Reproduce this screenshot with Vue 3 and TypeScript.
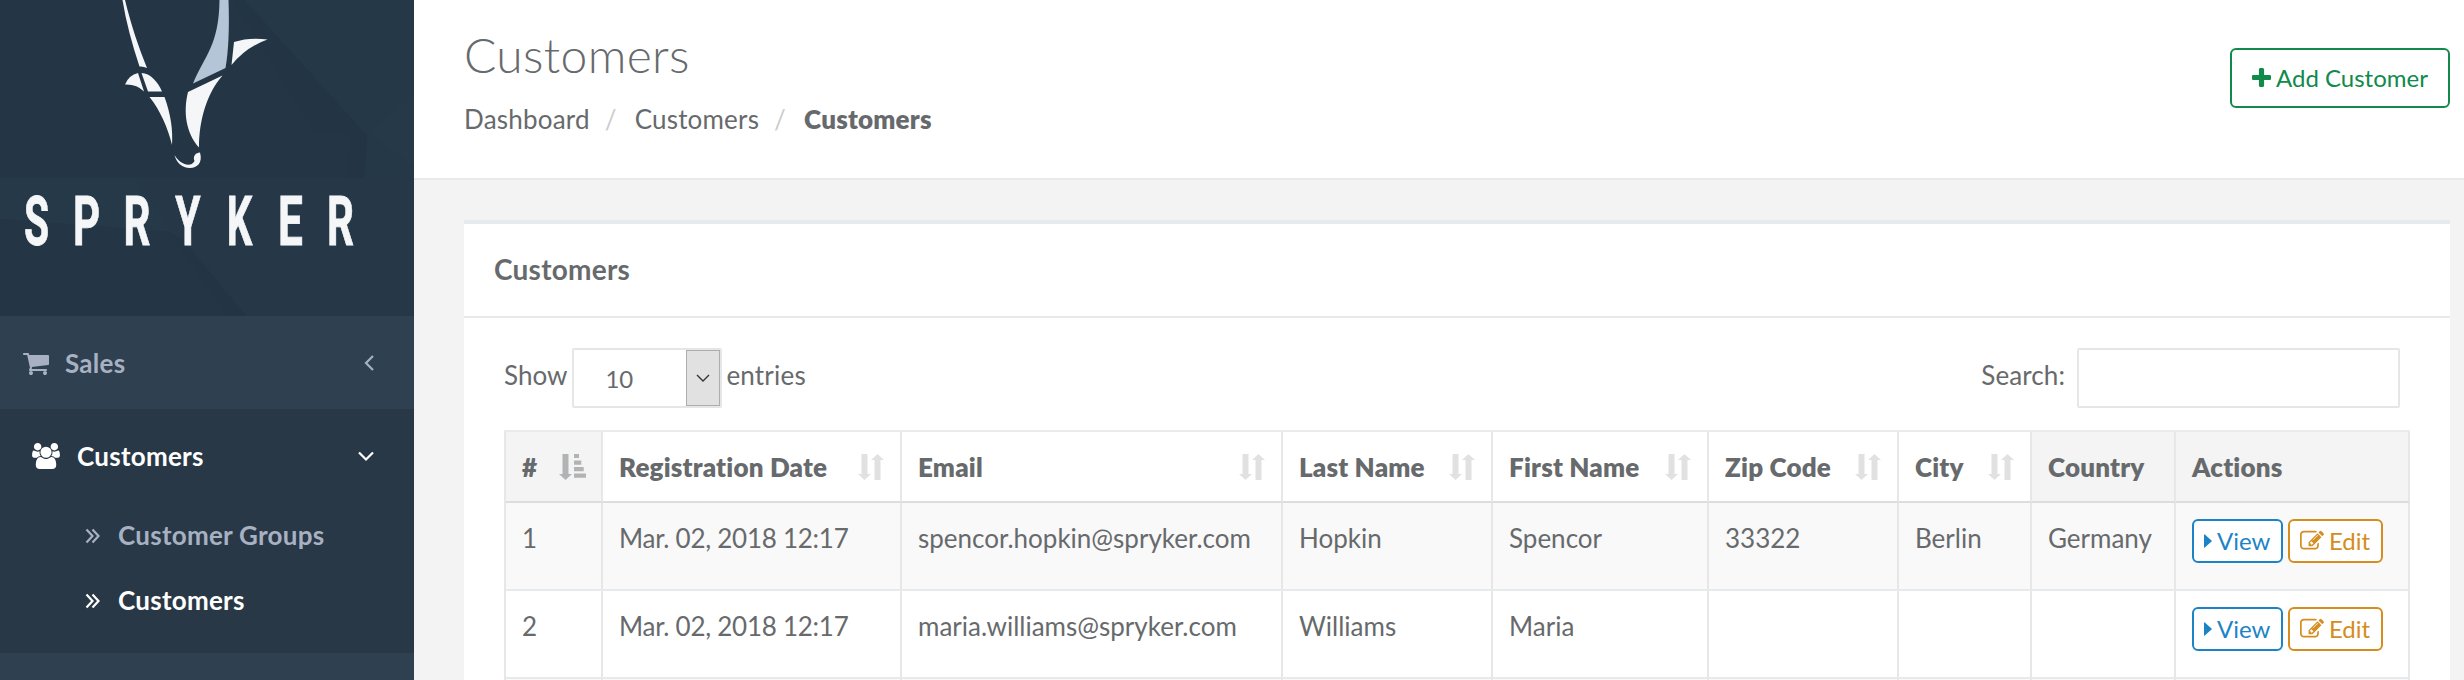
<script setup lang="ts">
interface Letter {
  char: string
  x: number
  scale: number
}

interface Column {
  key: keyof Customer | 'actions'
  label: string
  sort: 'active' | 'both' | 'none'
}

interface Customer {
  id: string
  registered: string
  email: string
  lastName: string
  firstName: string
  zip: string
  city: string
  country: string
}

const wordmark: Letter[] = [
  { char: 'S', x: 36.5, scale: 0.6 },
  { char: 'P', x: 86.5, scale: 0.62 },
  { char: 'R', x: 137, scale: 0.62 },
  { char: 'Y', x: 188, scale: 0.6 },
  { char: 'K', x: 239.5, scale: 0.59 },
  { char: 'E', x: 290.5, scale: 0.65 },
  { char: 'R', x: 340.5, scale: 0.62 },
]

const columns: Column[] = [
  { key: 'id', label: '#', sort: 'active' },
  { key: 'registered', label: 'Registration Date', sort: 'both' },
  { key: 'email', label: 'Email', sort: 'both' },
  { key: 'lastName', label: 'Last Name', sort: 'both' },
  { key: 'firstName', label: 'First Name', sort: 'both' },
  { key: 'zip', label: 'Zip Code', sort: 'both' },
  { key: 'city', label: 'City', sort: 'both' },
  { key: 'country', label: 'Country', sort: 'none' },
  { key: 'actions', label: 'Actions', sort: 'none' },
]

const customers: Customer[] = [
  {
    id: '1',
    registered: 'Mar. 02, 2018 12:17',
    email: 'spencor.hopkin@spryker.com',
    lastName: 'Hopkin',
    firstName: 'Spencor',
    zip: '33322',
    city: 'Berlin',
    country: 'Germany',
  },
  {
    id: '2',
    registered: 'Mar. 02, 2018 12:17',
    email: 'maria.williams@spryker.com',
    lastName: 'Williams',
    firstName: 'Maria',
    zip: '',
    city: '',
    country: '',
  },
]

const submenu = [
  { label: 'Customer Groups', active: false },
  { label: 'Customers', active: true },
]
</script>

<template>
  <div class="page">
    <aside class="sidebar">
      <svg class="brand" viewBox="0 0 414 316" width="414" height="316">
        <rect width="414" height="316" fill="#243646" />
        <path d="M244 0H414V178H364L367 136Z" fill="#253848" />
        <path d="M232 0H244L367 136L364 178H347L350 134L314 131Z" fill="#233545" />
        <path d="M368 133L414 94V166Z" fill="#263948" />
        <path d="M0 178H414V316H246L176 238Z" fill="#263848" />
        <path d="M0 178H134L158 210L170 232L0 219Z" fill="#263949" />
        <path d="M0 219L170 232L246 316H0Z" fill="#243646" />
        <path d="M168 232L182 238L246 316H228Z" fill="#233545" />
        <g fill="#f5f6f8">
          <path d="M122.500 0H125C131 25 139 48 147 68Q143 66 139.500 66.500C132 44 126 22 122.500 0Z" />
          <path d="M125 84.500Q129 75 138 73L144 91.500Q137 84 125 84.500Z" />
          <path d="M141.500 73C150 73 158 82 162 91.500H148Z" />
          <path d="M149.500 97H164.500C171 115 173 130 172 145C168 128 160 110 149.500 97Z" />
          <path d="M188 92L222.500 75.500C207 93 199 120 199 147.500C186 133 183 112 188 92Z" />
          <path d="M234 42Q249 37 267.500 39.500Q246 47 231.500 65Z" />
          <path d="M174.500 155C179 163 190 169 194.500 161C192.500 156 196 152.500 200 152.500C203 163 197 168 190 168C182 168 176 162 174.500 155Z" />
        </g>
        <path d="M219.500 0H228.500Q230 42 225.500 68L193 83.500C205 55 219 45 219.500 0Z" fill="#b4c5d7" />
        <text
          v-for="(letter, index) in wordmark"
          :key="index"
          class="wordmark"
          text-anchor="middle"
          :transform="`translate(${letter.x} 245) scale(${letter.scale} 1)`"
        >{{ letter.char }}</text>
      </svg>

      <nav>
        <div class="menu-item">
          <svg class="cart" viewBox="0 0 1792 1792" width="28" height="28">
            <path fill="currentColor" d="M704 1536q0 52-38 90t-90 38-90-38-38-90 38-90 90-38 90 38 38 90zm896 0q0 52-38 90t-90 38-90-38-38-90 38-90 90-38 90 38 38 90zm128-1088v512q0 24-16.500 42.500t-40.500 21.500l-1044 122q13 60 13 70 0 16-24 64h920q26 0 45 19t19 45-19 45-45 19h-1024q-26 0-45-19t-19-45q0-11 8-31.500t16-36 21.500-40 15.500-29.500l-177-823h-204q-26 0-45-19t-19-45 19-45 45-19h256q16 0 28.500 6.500t19.500 15.500 13 24.500 8 26 5.500 29.500 4.500 26h1201q26 0 45 19t19 45z" />
          </svg>
          <span class="menu-label">Sales</span>
          <svg class="chevron" viewBox="0 0 16 18" width="16" height="18">
            <path d="M15 2L8 9L15 16" />
          </svg>
        </div>
        <div class="menu-group">
          <div class="menu-item open">
            <svg class="users" viewBox="0 0 1920 1792" width="28" height="26">
              <path fill="currentColor" d="M593 896q-162 5-265 128h-134q-82 0-138-40.500t-56-118.500q0-353 124-353 6 0 43.500 21t97.500 42.500 119 21.500q67 0 133-23-5 37-5 66 0 139 81 256zm1071 637q0 120-73 189.500t-194 69.500h-874q-121 0-194-69.500t-73-189.500q0-53 3.500-103.500t14-109 26.500-108.500 43-97.500 62-81 85.500-53.500 111.500-20q10 0 43 21.500t73 48 107 48 135 21.500 135-21.500 107-48 73-48 43-21.500q61 0 111.500 20t85.500 53.500 62 81 43 97.500 26.500 108.500 14 109 3.500 103.500zm-1024-1277q0 106-75 181t-181 75-181-75-75-181 75-181 181-75 181 75 75 181zm704 384q0 159-112.500 271.500t-271.500 112.500-271.500-112.500-112.500-271.500 112.500-271.500 271.500-112.500 271.500 112.500 112.500 271.500zm576 225q0 78-56 118.500t-138 40.500h-134q-103-123-265-128 81-117 81-256 0-29-5-66 66 23 133 23 59 0 119-21.500t97.500-42.500 43.500-21q124 0 124 353zm-128-609q0 106-75 181t-181 75-181-75-75-181 75-181 181-75 181 75 75 181z" />
            </svg>
            <span class="menu-label">Customers</span>
            <svg class="chevron" viewBox="0 0 16 18" width="16" height="18">
              <path d="M1 5.500L8 12.500L15 5.500" />
            </svg>
          </div>
          <div v-for="item in submenu" :key="item.label" class="sub-item" :class="{ active: item.active }">
            <svg class="double-angle" viewBox="0 0 16 16" width="16" height="16">
              <path d="M1.500 1.500L7.500 8L1.500 14.500M7.500 1.500L13.500 8L7.500 14.500" />
            </svg>
            <span>{{ item.label }}</span>
          </div>
        </div>
      </nav>
    </aside>

    <main class="main">
      <header class="page-header">
        <div>
          <h2>Customers</h2>
          <ol class="breadcrumb">
            <li>Dashboard</li>
            <li>Customers</li>
            <li class="current">Customers</li>
          </ol>
        </div>
        <button class="btn btn-add" type="button">
          <svg viewBox="192 128 1408 1408" width="19" height="19">
            <path fill="currentColor" d="M1600 736v192q0 40-28 68t-68 28h-416v416q0 40-28 68t-68 28h-192q-40 0-68-28t-28-68v-416h-416q-40 0-68-28t-28-68v-192q0-40 28-68t68-28h416v-416q0-40 28-68t68-28h192q40 0 68 28t28 68v416h416q40 0 68 28t28 68z" />
          </svg>
          <span>Add Customer</span>
        </button>
      </header>

      <section class="panel">
        <h5>Customers</h5>
        <div class="panel-body">
          <div class="toolbar">
            <div class="length">
              <span class="label">Show</span>
              <div class="select">
                <span class="value">10</span>
                <span class="drop">
                  <svg viewBox="0 0 14 9" width="14" height="9"><path d="M1 1L7 7L13 1" /></svg>
                </span>
              </div>
              <span class="label">entries</span>
            </div>
            <div class="search">
              <span class="label">Search:</span>
              <input type="text" aria-label="Search" />
            </div>
          </div>

          <table>
            <colgroup>
              <col v-for="column in columns" :key="column.key" :class="`col-${column.key}`" />
            </colgroup>
            <thead>
              <tr>
                <th v-for="column in columns" :key="column.key" :class="{ shaded: column.sort !== 'both' }">
                  <div class="head">
                    <span>{{ column.label }}</span>
                    <svg v-if="column.sort === 'both'" class="sort" viewBox="0 0 26 26" width="26" height="26">
                      <path d="M3.500 0H9.500V20H13L6.500 26L0 20H3.500ZM16.500 26H22.500V6H26L19.500 0L13 6H16.500Z" />
                    </svg>
                    <svg v-else-if="column.sort === 'active'" class="sort active" viewBox="0 0 27 26" width="27" height="26">
                      <path d="M3.500 0H9.500V20H13L6.500 26L0 20H3.500ZM15 0H20V4H15ZM15 6.500H22.300V10.700H15ZM15 13H24.700V17.200H15ZM15 19.500H27V23.700H15Z" />
                    </svg>
                  </div>
                </th>
              </tr>
            </thead>
            <tbody>
              <tr v-for="customer in customers" :key="customer.id">
                <td>{{ customer.id }}</td>
                <td class="date">{{ customer.registered }}</td>
                <td>{{ customer.email }}</td>
                <td>{{ customer.lastName }}</td>
                <td>{{ customer.firstName }}</td>
                <td>{{ customer.zip }}</td>
                <td>{{ customer.city }}</td>
                <td>{{ customer.country }}</td>
                <td class="action-cell">
                  <div class="actions">
                    <button class="btn btn-view" type="button">
                      <svg viewBox="0 0 8 14" width="8" height="14"><path fill="currentColor" d="M0 0.800Q0 0 .8 .5L7.500 6.500Q8 7 7.500 7.500L.8 13.500Q0 14 0 13.200Z" /></svg>
                      <span>View</span>
                    </button>
                    <button class="btn btn-edit" type="button">
                      <svg viewBox="0 0 1792 1792" width="24" height="24">
                        <path fill="currentColor" d="M888 1184l116-116-152-152-116 116v56h96v96h56zm440-720q-16-16-33 1l-350 350q-17 17-1 33t33-1l350-350q17-17 1-33zm80 594v190q0 119-84.500 203.500t-203.500 84.500h-832q-119 0-203.500-84.500t-84.500-203.500v-832q0-119 84.500-203.500t203.500-84.500h832q63 0 117 25 15 7 18 23 3 17-9 29l-49 49q-14 14-32 8-23-6-45-6h-832q-66 0-113 47t-47 113v832q0 66 47 113t113 47h832q66 0 113-47t47-113v-126q0-13 9-22l64-64q15-15 35-7t20 29zm-96-738l288 288-672 672h-288v-288zm444 132l-92 92-288-288 92-92q28-28 68-28t68 28l152 152q28 28 28 68t-28 68z" />
                      </svg>
                      <span>Edit</span>
                    </button>
                  </div>
                </td>
              </tr>
              <tr class="next-row">
                <td v-for="column in columns" :key="column.key"></td>
              </tr>
            </tbody>
          </table>
        </div>
      </section>
    </main>
  </div>
</template>

<style>
html,
body {
  overflow: hidden;
}
</style>

<style scoped>
.page {
  display: flex;
  width: 2464px;
  height: 680px;
  overflow: hidden;
  background: #f3f3f3;
  color: #676a6c;
  font-family: Lato, "Open Sans", sans-serif;
  font-size: 26px;
  line-height: 37.14px;
}

.page svg {
  display: block;
  flex: none;
}

.sidebar {
  width: 414px;
  height: 680px;
  flex: none;
  background: #2f4050;
  color: #a7b1c2;
  font-weight: 700;
  letter-spacing: 0.26px;
}

.wordmark {
  fill: #f5f6f8;
  stroke: #f5f6f8;
  stroke-width: 0.8px;
  font-family: Roboto, sans-serif;
  font-size: 68px;
  font-weight: 700;
  letter-spacing: 0;
}

.menu-item {
  display: flex;
  align-items: center;
  box-sizing: border-box;
  height: 93px;
  padding: 0 40px 0 22px;
}

.menu-label {
  flex: 1;
  padding-top: 2px;
}

.cart {
  margin: 0 15px 0 0;
}

.menu-group {
  height: 244px;
  background: #293846;
}

.menu-item.open {
  padding-left: 32px;
  color: #fff;
}

.users {
  margin-right: 17px;
}

.chevron path,
.double-angle path {
  fill: none;
  stroke: currentColor;
  stroke-width: 2.2;
}

.sub-item {
  display: flex;
  align-items: center;
  height: 65px;
  padding-left: 85px;
}

.sub-item span {
  padding-top: 2px;
}

.sub-item.active {
  color: #fff;
}

.double-angle {
  margin: 2px 17px 0 0;
}

.main {
  flex: 1;
  min-width: 0;
}

.page-header {
  display: flex;
  justify-content: space-between;
  align-items: flex-start;
  box-sizing: border-box;
  height: 180px;
  padding: 0 14px 0 50px;
  border-bottom: 2px solid #e7eaec;
  background: #fff;
}

h2 {
  margin: 28px 0 0;
  font-size: 48px;
  font-weight: 300;
  line-height: 53px;
  letter-spacing: 0.35px;
}

.breadcrumb {
  display: flex;
  margin: 20px 0 0;
  padding: 0;
  list-style: none;
  letter-spacing: 0.2px;
}

.breadcrumb li + li::before {
  content: "/";
  padding: 0 18px 0 15px;
  color: #ccc;
  font-weight: 400;
}

.breadcrumb .current {
  font-weight: 800;
}

.btn {
  display: flex;
  align-items: center;
  box-sizing: border-box;
  border: 2px solid currentColor;
  border-radius: 6px;
  background: #fff;
  font-family: inherit;
  font-size: 24px;
  line-height: 36px;
}

.btn-add {
  width: 220px;
  height: 60px;
  margin-top: 48px;
  padding: 0 0 0 20px;
  gap: 5px;
  color: #118a4b;
}

.btn-add svg {
  margin-top: -1px;
}

.panel {
  height: 500px;
  margin: 40px 14px 0 50px;
  border-top: 4px solid #e7eaec;
  background: #fff;
}

h5 {
  box-sizing: border-box;
  height: 94px;
  margin: 0;
  padding: 27px 30px 0;
  border-bottom: 2px solid #e7eaec;
  font-size: 28px;
  font-weight: 700;
  line-height: 37px;
  letter-spacing: 0.25px;
}

.panel-body {
  padding: 30px 40px 0;
}

.toolbar {
  display: flex;
  justify-content: space-between;
  height: 82px;
  padding-right: 10px;
}

.length,
.search {
  display: flex;
  align-items: flex-start;
}

.label {
  padding-top: 9px;
}

.length .label:last-child {
  letter-spacing: 0.2px;
}

.search .label {
  letter-spacing: 0.1px;
}

.select {
  display: flex;
  justify-content: space-between;
  box-sizing: border-box;
  width: 150px;
  height: 60px;
  margin: 0 4px 0 5px;
  border: 2px solid #e5e6e7;
  border-radius: 2px;
}

.value {
  padding: 10px 0 0 31px;
  font-size: 24px;
}

.drop {
  display: flex;
  align-items: center;
  justify-content: center;
  box-sizing: border-box;
  width: 34px;
  border: 1px solid #adadad;
  background: #e1e1e1;
}

.drop path {
  fill: none;
  stroke: #333;
  stroke-width: 1.4;
}

.search input {
  box-sizing: border-box;
  width: 323px;
  height: 60px;
  margin: 0 0 0 12px;
  border: 2px solid #e5e6e7;
  border-radius: 2px;
  background: #fff;
}

table {
  width: 1906px;
  table-layout: fixed;
  border-collapse: separate;
  border-spacing: 0;
  border-top: 2px solid #ebebeb;
  border-left: 2px solid #e7e7e7;
}

.col-id { width: 97px; }
.col-registered { width: 299px; }
.col-email { width: 381px; }
.col-lastName { width: 210px; }
.col-firstName { width: 216px; }
.col-zip { width: 190px; }
.col-city { width: 133px; }
.col-country { width: 144px; }
.col-actions { width: 234px; }

th,
td {
  box-sizing: border-box;
  padding: 17px 14px 0 16px;
  border-right: 2px solid #e7e7e7;
  text-align: left;
  vertical-align: top;
  white-space: nowrap;
}

th {
  height: 71px;
  border-bottom: 2px solid #ddd;
  font-weight: 800;
  letter-spacing: 0.18px;
}

th.shaded {
  background: #f4f4f4;
}

td {
  height: 88px;
  border-bottom: 2px solid #e7eaec;
}

td.action-cell {
  padding-top: 16px;
}

.date {
  letter-spacing: -0.26px;
}

tbody tr:nth-child(odd) {
  background: #f9f9f9;
}

.head {
  display: flex;
  justify-content: space-between;
  align-items: flex-start;
}

.sort {
  margin-top: 5px;
  margin-right: 2px;
  fill: #e1e1e1;
}

.sort.active {
  margin-right: 1px;
  fill: #b2b3b4;
}

.actions {
  display: flex;
  gap: 5px;
}

.btn-view,
.btn-edit {
  height: 44px;
  padding: 0 0 0 10px;
}

.btn-view {
  width: 91px;
  gap: 5px;
  color: #1c84c6;
}

.btn-edit {
  width: 95px;
  gap: 5px;
  color: #d58d20;
}
</style>
